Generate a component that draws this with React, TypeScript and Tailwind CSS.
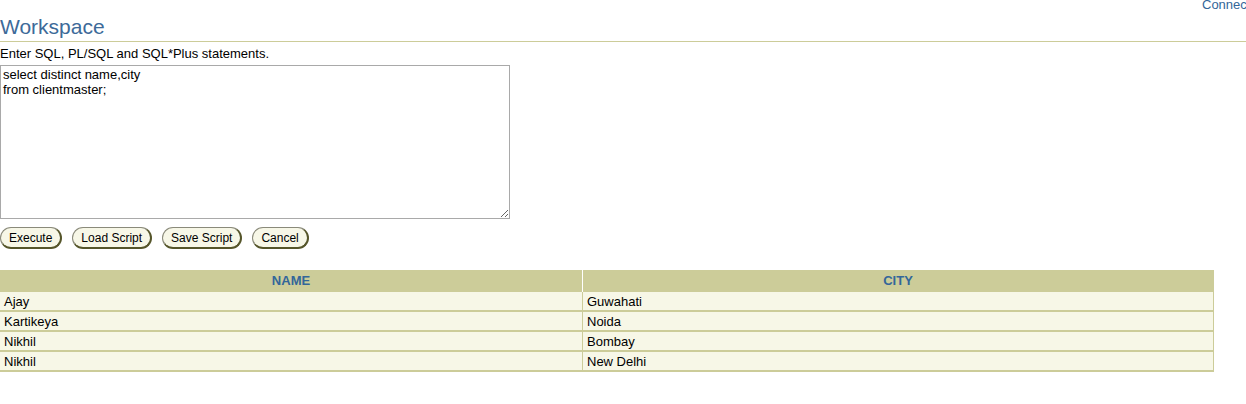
const rows = [
  { name: "Ajay", city: "Guwahati" },
  { name: "Kartikeya", city: "Noida" },
  { name: "Nikhil", city: "Bombay" },
  { name: "Nikhil", city: "New Delhi" },
];

function PillButton({ label }: { label: string }) {
  return (
    <button
      type="button"
      className="h-[22px] rounded-full border border-t-[#8a8a7a] border-l-[#8a8a7a] border-r-2 border-b-2 border-r-[#55552a] border-b-[#55552a] bg-[#f7f7e7] px-[8px] text-[12px] leading-none text-black"
    >
      {label}
    </button>
  );
}

export default function App() {
  return (
    <div className="relative h-[404px] w-[1246px] overflow-hidden bg-white font-['Liberation_Sans',Arial,sans-serif] text-[13px] text-black">
      <a className="absolute left-[1202px] top-[-5px] whitespace-nowrap text-[13px] text-[#336699]">Connection</a>

      <h1 className="pt-[13px] text-[21px] leading-[27px] text-[#3d6a99]">Workspace</h1>
      <div className="mt-px h-px w-full bg-[#cccc99]" />

      <p className="mt-[4px] leading-[15px]">Enter SQL, PL/SQL and SQL*Plus statements.</p>

      <textarea
        className="mt-[4px] block h-[154px] w-[510px] resize border border-[#a9a9a9] px-[2px] py-px text-[13px] leading-[15px] outline-none"
        defaultValue={"select distinct name,city\nfrom clientmaster;"}
      />

      <div className="mt-[8px] flex gap-[10px]">
        <PillButton label="Execute" />
        <PillButton label="Load Script" />
        <PillButton label="Save Script" />
        <PillButton label="Cancel" />
      </div>

      <div className="mt-[21px] w-[1214px] border-r border-[#cccc99]">
        <div className="grid h-[22px] grid-cols-[583px_1fr] bg-[#cccc99] text-[13px] font-bold text-[#336699]">
          <div className="flex items-center justify-center border-r border-white">NAME</div>
          <div className="flex items-center justify-center">CITY</div>
        </div>
        {rows.map((r, i) => (
          <div key={i} className="grid h-[20px] grid-cols-[583px_1fr] border-b-2 border-[#cccc99] bg-[#f7f7e7]">
            <div className="flex items-center border-r border-[#cccc99] pl-[4px]">{r.name}</div>
            <div className="flex items-center pl-[4px]">{r.city}</div>
          </div>
        ))}
      </div>
    </div>
  );
}
